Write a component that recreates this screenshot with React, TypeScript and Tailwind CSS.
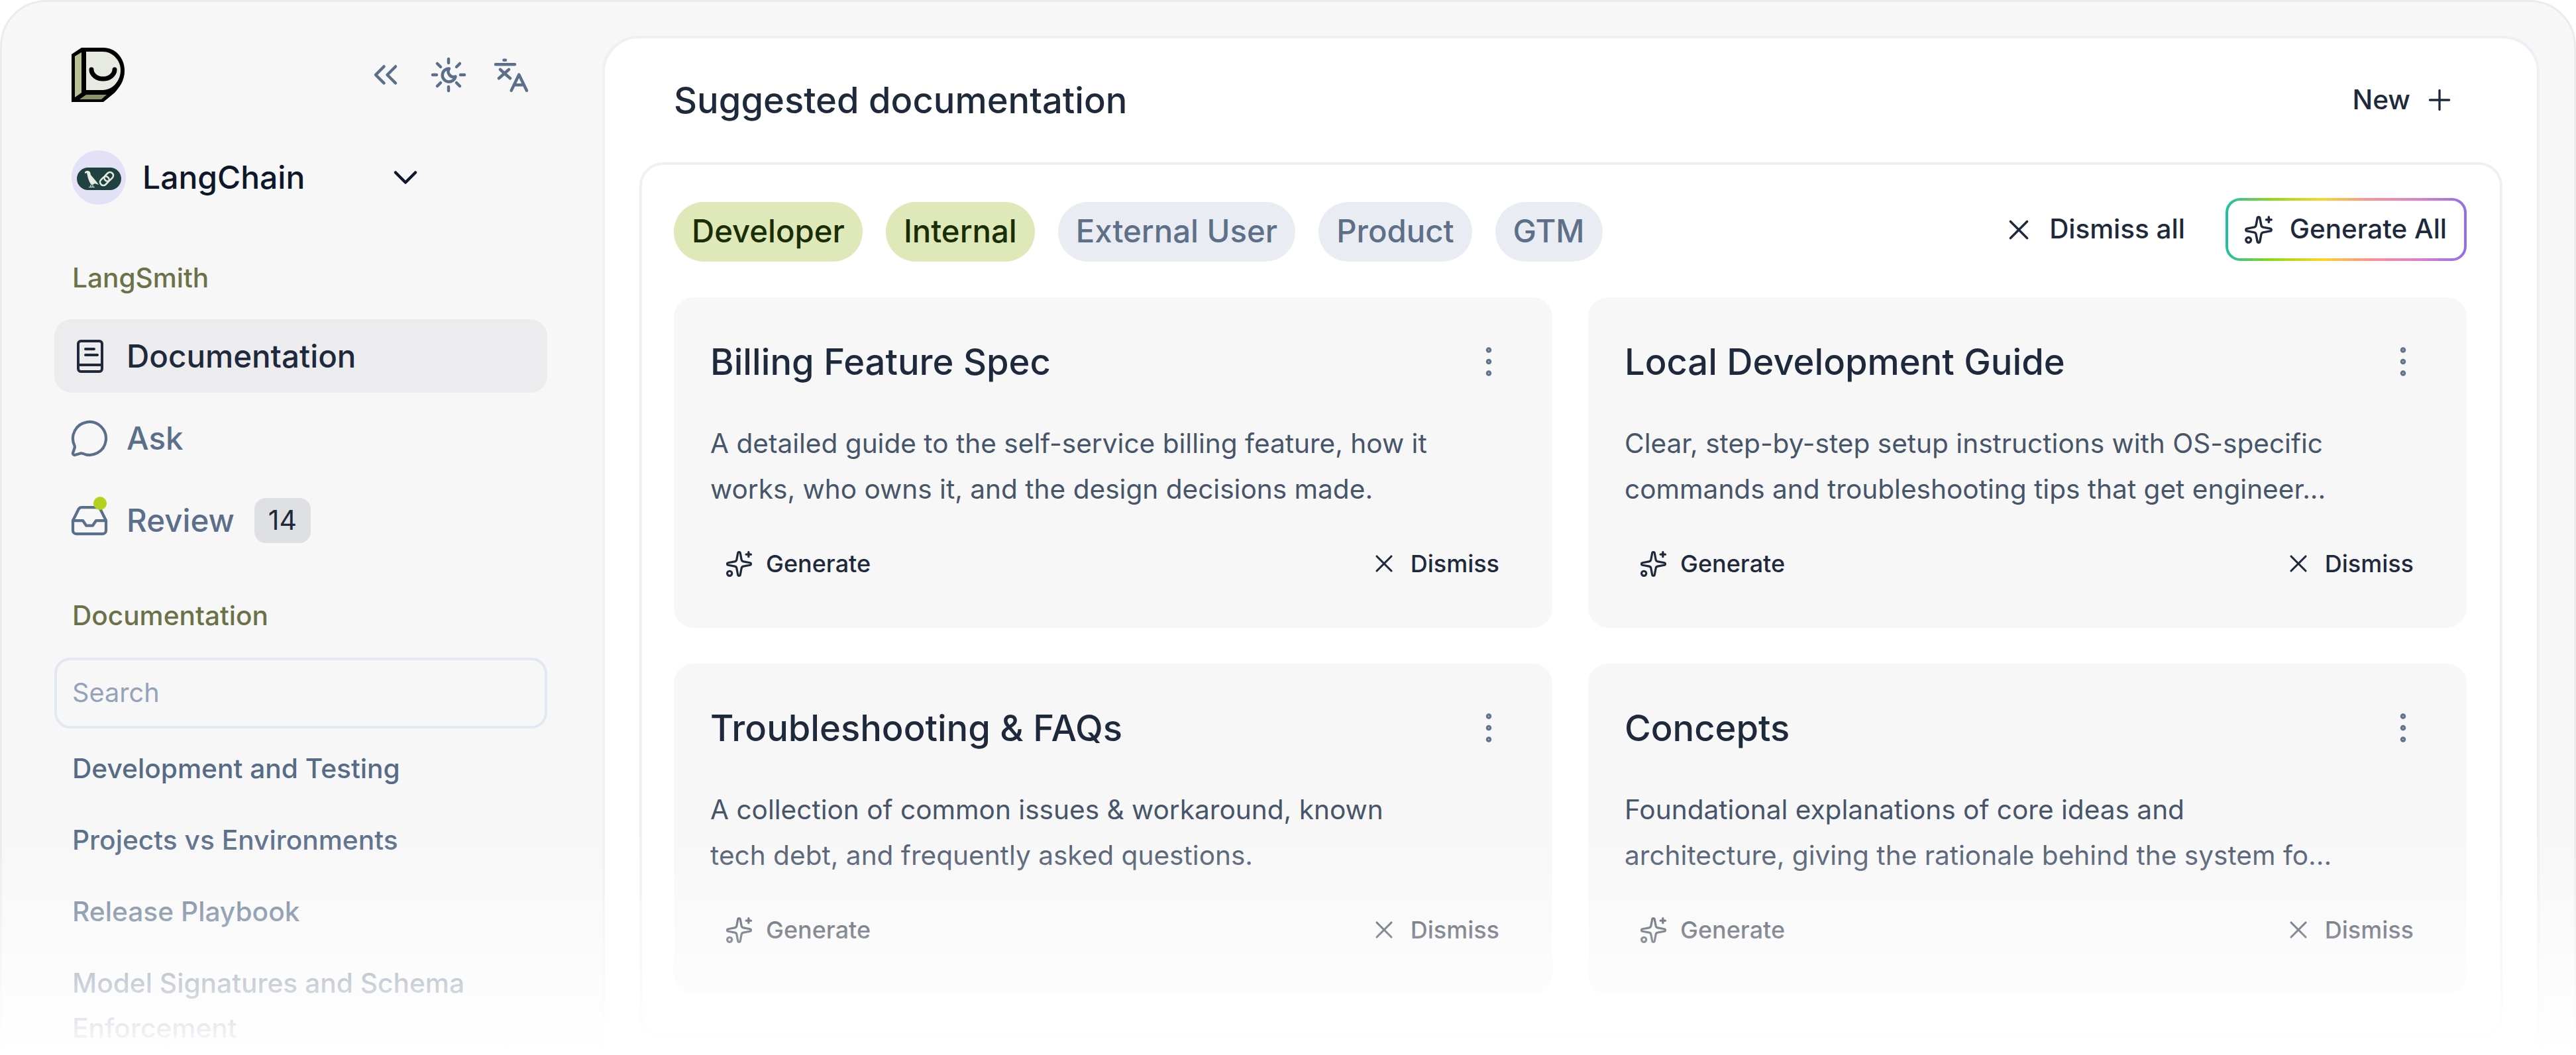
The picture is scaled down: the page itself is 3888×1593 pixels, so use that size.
import {
  ChevronDown,
  ChevronsLeft,
  EllipsisVertical,
  Inbox,
  MessageCircle,
  Plus,
  Sparkles,
  X,
} from "lucide-react";

const cards = [
  {
    title: "Billing Feature Spec",
    lines: [
      "A detailed guide to the self-service billing feature, how it",
      "works, who owns it, and the design decisions made.",
    ],
  },
  {
    title: "Local Development Guide",
    lines: [
      "Clear, step-by-step setup instructions with OS-specific",
      "commands and troubleshooting tips that get engineer...",
    ],
  },
  {
    title: "Troubleshooting & FAQs",
    lines: [
      "A collection of common issues & workaround, known",
      "tech debt, and frequently asked questions.",
    ],
  },
  {
    title: "Concepts",
    lines: [
      "Foundational explanations of core ideas and",
      "architecture, giving the rationale behind the system fo...",
    ],
  },
];

const docs = [
  "Development and Testing",
  "Projects vs Environments",
  "Release Playbook",
  "Model Signatures and Schema Enforcement",
];

function Logo() {
  return (
    <svg width="80" height="82" viewBox="0 0 80 82" className="shrink-0">
      <path d="M0 10 L15 0 H48 C66 0 80 15 80 35 C80 50 72 60 65 68 L48 82 H0 Z" fill="#000" />
      <path d="M22 6 H47 C62 6 74 19 74 34 C74 50 62 64 47 64 H22 Z" fill="#e6eae0" />
      <path d="M5 13 L15 7 V68 L5 75 Z" fill="#b9c193" />
      <path d="M12 78 L22 71 H53 L45 78 Z" fill="#8b9465" />
      <path d="M30 33 a17.5 14 0 0 0 35 0" fill="none" stroke="#000" strokeWidth="7" strokeLinecap="round" />
    </svg>
  );
}

function WorkspaceAvatar() {
  return (
    <svg width="82" height="82" viewBox="0 0 82 82" className="shrink-0">
      <circle cx="41" cy="41" r="41" fill="#e3e1f6" />
      <rect x="8" y="26" width="67" height="34" rx="17" fill="#1f4240" />
      <path
        d="M20 33 c2 -3 6 -3 8 0 l1 4 c3 4 8 9 12 15 l-6 -2 c-1 1 -3 2 -5 2 c-3 -3 -5 -9 -6 -14 l-1 -4 l-3 1 z"
        fill="#e6ebe3"
      />
      <path d="M29 52 v3 M32 52 v3 M26 55.5 h9" stroke="#e6ebe3" strokeWidth="1.2" fill="none" />
      <g transform="rotate(-45 53 43)" fill="none" stroke="#e6ebe3" strokeWidth="2.6">
        <rect x="41" y="38" width="15" height="10" rx="5" />
        <rect x="50" y="38" width="15" height="10" rx="5" />
      </g>
    </svg>
  );
}

function DocIcon() {
  return (
    <svg width="40" height="50" viewBox="0 0 40 50" fill="none" stroke="#1e293b" strokeWidth="4" strokeLinecap="round" className="shrink-0">
      <rect x="2" y="2" width="36" height="46" rx="4" />
      <path d="M2 38 H38 M13 14 H26 M13 23 H31" />
    </svg>
  );
}

function ThemeIcon() {
  return (
    <svg width="60" height="60" viewBox="0 0 60 60" fill="none" stroke="#5b6f8a" strokeWidth="4.5" strokeLinecap="round" className="shrink-0">
      <path d="M30 6 V12 M30 48 V54 M6 30 H12 M48 30 H54 M13 13 L18 18 M47 13 L42 18 M13 47 L18 42 M47 47 L42 42" />
      <path d="M31 20.5 a10 10 0 1 0 9.5 12 a8 8 0 0 1 -9.5 -12 z" strokeLinejoin="round" />
    </svg>
  );
}

function TranslateIcon() {
  return (
    <svg width="60" height="60" viewBox="0 0 60 60" fill="none" stroke="#5b6f8a" strokeWidth="4.5" strokeLinecap="round" strokeLinejoin="round" className="shrink-0">
      <path d="M6 14.3 H35 M18.5 7.7 H21 M13 22 L28 35.3 M11 35.3 L26 22" />
      <path d="M29.7 53.7 L41.3 29.7 L53 53.7 M34.7 45.3 H48" />
    </svg>
  );
}

function Card({ title, lines }: { title: string; lines: string[] }) {
  return (
    <div className="flex h-[499px] flex-col rounded-[30px] bg-[#f7f7f8] px-[55px] pt-[57px]">
      <div className="flex h-[80px] items-center justify-between">
        <div className="text-[54.3px] leading-[80px] font-medium text-[#1e293b]">{title}</div>
        <EllipsisVertical size={60} strokeWidth={1.4} className="mr-[11px] text-[#64748b]" />
      </div>
      <div className="mt-[49px] text-[40.6px] leading-[69px] text-[#475569]">
        {lines.map((l) => (
          <div key={l} className="whitespace-nowrap">{l}</div>
        ))}
      </div>
      <div className="mt-[35px] flex h-[86px] items-center justify-between pl-[22px] pr-[25px] text-[36px] font-medium text-[#1e293b]">
        <div className="flex items-center gap-[19px]">
          <Sparkles size={43} strokeWidth={1.8} />
          <span>Generate</span>
        </div>
        <div className="flex items-center gap-[18px]">
          <X size={44} strokeWidth={1.7} />
          <span>Dismiss</span>
        </div>
      </div>
    </div>
  );
}

export default function App() {
  return (
    <div className="relative h-[1593px] w-[3888px] overflow-hidden bg-white font-['Inter',sans-serif]">
      <div className="flex h-[1700px] rounded-[70px] border-[3px] border-[#ebebec] bg-[#f7f7f8]">
        {/* sidebar */}
        <div className="w-[906px] shrink-0 pl-[79px] pt-[69px]">
          <div className="flex w-[744px] items-center justify-between pl-[26px] pr-[24px]">
            <Logo />
            <div className="flex items-center gap-[35px] text-[#5b6f8a]">
              <ChevronsLeft size={60} strokeWidth={1.8} />
              <ThemeIcon />
              <TranslateIcon />
            </div>
          </div>

          <div className="mt-[73px] flex w-[744px] items-center gap-[25px] pl-[26px] pr-[184px]">
            <WorkspaceAvatar />
            <span className="text-[48px] font-medium text-[#0f172a]">LangChain</span>
            <ChevronDown size={60} strokeWidth={1.8} className="ml-auto text-[#0f172a]" />
          </div>

          <div className="mt-[86px] pl-[27px] text-[40.6px] leading-[50px] font-medium text-[#6b7248]">LangSmith</div>

          <div className="mt-[37px] flex w-[744px] flex-col gap-[13px] text-[47.5px] font-medium text-[#5b6f8a]">
            <div className="flex h-[111px] items-center rounded-[26px] bg-[#ececee] pl-[34px] text-[#1e293b]">
              <DocIcon />
              <span className="ml-[35px]">Documentation</span>
            </div>
            <div className="flex h-[111px] items-center pl-[23px]">
              <MessageCircle size={60} strokeWidth={1.7} />
              <span className="ml-[26px]">Ask</span>
            </div>
            <div className="flex h-[111px] items-center pl-[23px]">
              <div className="relative h-[60px] w-[60px]">
                <Inbox size={60} strokeWidth={1.7} />
                <div className="absolute top-[-6px] right-[4px] h-[20px] w-[20px] rounded-full bg-[#b5d01d]" />
              </div>
              <span className="ml-[26px]">Review</span>
              <span className="ml-[30px] flex h-[68px] w-[85px] items-center justify-center rounded-[17px] bg-[#dfe0e3] text-[41px] font-normal text-[#1e293b]">
                14
              </span>
            </div>
          </div>

          <div className="mt-[64px] pl-[27px] text-[40.6px] leading-[50px] font-medium text-[#6b7248]">Documentation</div>

          <div className="mt-[38px] flex h-[107px] w-[744px] items-center rounded-[24px] border-[4px] border-[#e2e8f0] pl-[23px] text-[39.7px] text-[#94a3b8]">
            Search
          </div>

          <div className="mt-[27px] flex w-[744px] flex-col gap-[40px] pl-[27px] pr-[40px] text-[40.7px] leading-[68px] font-medium text-[#566b85]">
            {docs.map((d) => (
              <div key={d}>{d}</div>
            ))}
          </div>
        </div>

        {/* main panel */}
        <div className="mr-[52px] mt-[51px] flex-1 rounded-[55px] border-[4px] border-[#edf0f4] bg-white">
          <div className="flex h-[187px] items-center justify-between pl-[104px] pr-[122px]">
            <div className="text-[54.3px] font-medium text-[#1e293b]">Suggested documentation</div>
            <div className="flex items-center gap-[19px] text-[40.6px] font-medium text-[#1e293b]">
              <span>New</span>
              <Plus size={50} strokeWidth={1.6} />
            </div>
          </div>

          <div className="mx-[52px] rounded-[36px] border-[4px] border-[#edf0f4] pb-[62px] pl-[48px] pr-[50px] pt-[50px]">
            <div className="flex h-[95px] items-center justify-between">
              <div className="mt-[6px] flex items-center gap-[35px] text-[47.3px] font-medium">
                <span className="flex h-[90px] items-center rounded-full bg-[#dfe8b8] px-[27px] text-[#1a2e05]">Developer</span>
                <span className="flex h-[90px] items-center rounded-full bg-[#dfe8b8] px-[27px] text-[#1a2e05]">Internal</span>
                <span className="flex h-[90px] items-center rounded-full bg-[#e9edf3] px-[27px] text-[#5e6f88]">External User</span>
                <span className="flex h-[90px] items-center rounded-full bg-[#e9edf3] px-[27px] text-[#5e6f88]">Product</span>
                <span className="flex h-[90px] items-center rounded-full bg-[#e9edf3] px-[27px] text-[#5e6f88]">GTM</span>
              </div>
              <div className="flex items-center text-[40.4px] font-medium text-[#1e293b]">
                <X size={50} strokeWidth={1.7} />
                <span className="ml-[21px]">Dismiss all</span>
                <div className="ml-[61px] rounded-[22px] bg-[linear-gradient(90deg,#1fbfa4,#8fdc10,#ffd422,#ff9090,#e47bd0,#8e6fe8)] p-[4px]">
                  <div className="flex h-[87px] items-center gap-[24px] rounded-[18px] bg-white pl-[23px] pr-[26px]">
                    <Sparkles size={46} strokeWidth={1.8} />
                    <span>Generate All</span>
                  </div>
                </div>
              </div>
            </div>

            <div className="mt-[55px] grid grid-cols-2 gap-[54px]">
              {cards.map((c) => (
                <Card key={c.title} title={c.title} lines={c.lines} />
              ))}
            </div>
          </div>
        </div>
      </div>

      {/* bottom fade */}
      <div className="absolute inset-x-0 bottom-0 h-[345px] bg-gradient-to-b from-white/0 to-white" />
    </div>
  );
}
